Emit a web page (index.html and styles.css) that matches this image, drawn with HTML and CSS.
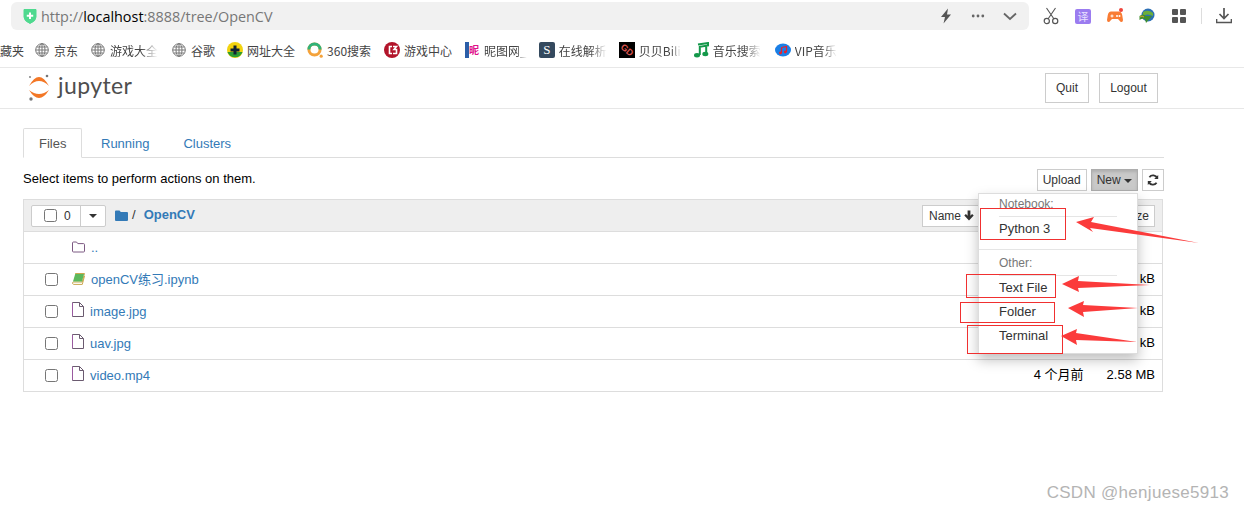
FILE: index.html
```html
<!DOCTYPE html>
<html lang="zh">
<head>
<meta charset="utf-8">
<title>OpenCV - Jupyter</title>
<link rel="stylesheet" href="styles.css">
</head>
<body>
<div class="browser-bar">
  <div class="address">
    <svg class="shield" viewBox="0 0 14 16"><path d="M1 1.5 L13 1.5 L13 9 Q13 13 7 15.5 Q1 13 1 9 Z" fill="#4fd98f" stroke="#4fd98f" stroke-linejoin="round"/><path d="M7 4.5v6.5M3.8 7.8h6.4" stroke="#fff" stroke-width="2"/></svg>
    <span class="url"><span class="dim">http://</span>localhost<span class="dim">:8888/tree/OpenCV</span></span>
    <span class="address-actions">
      <svg class="a-icon" viewBox="0 0 14 16"><path d="M9 0.5 L2 9 L6 9 L4.5 15.5 L12 6.5 L8 6.5 Z" fill="#555"/></svg>
      <svg class="a-icon" viewBox="0 0 14 16"><circle cx="2.2" cy="8" r="1.4" fill="#666"/><circle cx="7" cy="8" r="1.4" fill="#666"/><circle cx="11.8" cy="8" r="1.4" fill="#666"/></svg>
      <svg class="a-icon" viewBox="0 0 14 16"><path d="M1 5.5 L7 11 L13 5.5" fill="none" stroke="#666" stroke-width="1.8"/></svg>
    </span>
  </div>
  <div class="tools">
    <svg class="tool" viewBox="0 0 16 18"><path d="M3.5 1 L11 12M12.5 1 L5 12" stroke="#555" stroke-width="1.1" fill="none"/><circle cx="3.8" cy="14" r="2.6" fill="none" stroke="#555" stroke-width="1.2"/><circle cx="12.2" cy="14" r="2.6" fill="none" stroke="#555" stroke-width="1.2"/></svg>
    <span class="translate">译</span>
    <svg class="tool" viewBox="0 0 16 18"><path d="M4 4.5 H12 Q14.5 4.5 15.2 8 L16 13 Q16 15.5 13.8 15 L11 12 H5 L2.2 15 Q0 15.5 0 13 L0.8 8 Q1.5 4.5 4 4.5Z" fill="#f97c34"/><path d="M3.5 9h3M5 7.5v3" stroke="#fff"/><circle cx="10" cy="9" r="1" fill="#fff"/><circle cx="12.5" cy="9" r="1" fill="#fff"/><circle cx="14" cy="3" r="2" fill="#f0443c"/></svg>
    <svg class="tool" viewBox="0 0 16 18"><circle cx="9" cy="8" r="6.5" fill="#2c6fb5"/><path d="M4 5 Q9 2 14 6 L14 9 Q8 6 4 9Z" fill="#6cae3c"/><path d="M0.5 9 Q4 6 7 9 L13 9 L7 16 L6 12 Q3 11 0.5 13Z" fill="#3f8f2e"/><path d="M1 10 Q3 8 5 10" stroke="#e0a030" fill="none"/></svg>
    <svg class="tool" viewBox="0 0 16 18"><rect x="1" y="2" width="6" height="6" rx="1" fill="#555"/><rect x="9" y="2" width="6" height="6" rx="1" fill="#555"/><rect x="1" y="10" width="6" height="6" rx="1" fill="#555"/><rect x="9" y="10" width="6" height="6" rx="1" fill="#555"/></svg>
    <span class="tool-sep"></span>
    <svg class="tool" viewBox="0 0 16 18"><path d="M8 1v10M3.5 7 L8 11.5 L12.5 7" fill="none" stroke="#555" stroke-width="1.7"/><path d="M0.5 12v3.5h15V12" fill="none" stroke="#555" stroke-width="1.7"/></svg>
  </div>
</div>

<div class="bookmarks">
  <span class="bm bm-first"><span class="bm-text">收藏夹</span></span>
  <span class="bm bm-gap1"><svg class="globe" viewBox="0 0 14 14"><use href="#globe-art"/></svg><span class="bm-text">京东</span></span>
  <span class="bm bm-gap2"><svg class="globe" viewBox="0 0 14 14"><use href="#globe-art"/></svg><span class="bm-text fade">游戏大全</span></span>
  <span class="bm"><svg class="globe" viewBox="0 0 14 14"><use href="#globe-art"/></svg><span class="bm-text">谷歌</span></span>
  <span class="bm"><svg class="bm-icon" viewBox="0 0 16 16"><circle cx="8" cy="8" r="8" fill="#f2d30f"/><path d="M0.5 10 A8 8 0 0 0 15.5 10 Z" fill="#2d9d33"/><path d="M8 3.5v9M3.5 8h9" stroke="#123" stroke-width="3"/></svg><span class="bm-text">网址大全</span></span>
  <span class="bm bm-gap1"><svg class="bm-icon" viewBox="0 0 16 16"><circle cx="7.5" cy="7.5" r="5.6" fill="none" stroke="#f4a23a" stroke-width="3"/><path d="M1.9 7.5 A5.6 5.6 0 0 1 13.1 7.5" fill="none" stroke="#2fb37a" stroke-width="3"/><circle cx="14.2" cy="14.2" r="1.6" fill="#f4a23a"/></svg><span class="bm-text">360搜索</span></span>
  <span class="bm bm-gap1"><svg class="bm-icon" viewBox="0 0 16 16"><circle cx="8" cy="8" r="8" fill="#b2142a"/><path d="M8 4.5H5.5V11.5H8M9 4.5h3.5L10 7.5h2.5v4H9" fill="none" stroke="#fff" stroke-width="1.6"/></svg><span class="bm-text">游戏中心</span></span>
  <span class="bm"><span class="nitu"><span class="nitu-bar"></span><span class="nitu-glyph">昵</span></span><span class="bm-text fade-short">昵图网_</span></span>
  <span class="bm"><span class="s-icon">S</span><span class="bm-text fade">在线解析</span></span>
  <span class="bm"><span class="gd-icon"><span class="gd-text">GD</span></span><span class="bm-text fade-short">贝贝Bili</span></span>
  <span class="bm bm-gap2"><svg class="bm-icon" viewBox="0 0 16 16"><path d="M5 2.5 L15 1 V3.5 L6.8 4.8 V13 M13.2 3 V11.5" fill="none" stroke="#14984a" stroke-width="2"/><ellipse cx="4" cy="13.3" rx="3" ry="2.2" fill="#14984a"/><ellipse cx="12.3" cy="12" rx="3" ry="2.2" fill="#14984a"/></svg><span class="bm-text fade">音乐搜索</span></span>
  <span class="bm"><svg class="bm-icon" viewBox="0 0 16 16"><ellipse cx="8" cy="8" rx="8" ry="6.5" fill="#1a7fe6"/><path d="M6.5 5.5 L11.5 4.5 V10M6.5 5.5V11" fill="none" stroke="#e8202c" stroke-width="1.2"/><circle cx="5.5" cy="11" r="1.4" fill="#e8202c"/><circle cx="10.3" cy="10" r="1.4" fill="#e8202c"/></svg><span class="bm-text fade">VIP音乐</span></span>
</div>

<svg class="defs" aria-hidden="true"><defs><g id="globe-art" fill="none" stroke="#777" stroke-width="1"><circle cx="7" cy="7" r="6.3"/><ellipse cx="7" cy="7" rx="3" ry="6.3"/><path d="M0.7 7h12.6M1.6 4h10.8M1.6 10h10.8M7 .7v12.6"/></g></defs></svg>

<header class="jp-header">
  <svg class="jp-logo" viewBox="0 0 24 30">
    <path d="M1 12 Q11 -6 21 12 Q11 2 1 12Z" fill="#f37726"/>
    <path d="M1 16 Q11 32 21 16 Q11 24 1 16Z" fill="#f37726"/>
    <circle cx="19" cy="2" r="1.3" fill="#767677"/><circle cx="2" cy="3" r="0.9" fill="#767677"/><circle cx="3" cy="25" r="1.7" fill="#767677"/>
  </svg>
  <span class="jp-word">jupyter</span>
  <span class="jp-actions">
    <button class="btn btn-tall btn-quit">Quit</button>
    <button class="btn btn-tall btn-logout">Logout</button>
  </span>
</header>

<main class="container">
  <nav class="tabs">
    <a class="tab tab-active">Files</a>
    <a class="tab">Running</a>
    <a class="tab">Clusters</a>
  </nav>
  <div class="action-row">
    <span class="hint">Select items to perform actions on them.</span>
    <span class="action-buttons">
      <button class="btn">Upload</button>
      <span class="new-wrap">
        <button class="btn btn-on">New <i class="caret"></i></button>
        <div class="menu">
          <div class="menu-head">Notebook:</div>
          <div class="menu-rule"></div>
          <div class="menu-item">Python 3</div>
          <div class="menu-full-rule"></div>
          <div class="menu-head">Other:</div>
          <div class="menu-rule"></div>
          <div class="menu-item">Text File</div>
          <div class="menu-item">Folder</div>
          <div class="menu-item">Terminal</div>
        </div>
      </span>
      <button class="btn btn-icon"><svg class="refresh" viewBox="0 0 12 12"><path d="M10.2 4.2 A4.5 4.5 0 0 0 2.4 3.2 M1.8 7.8 A4.5 4.5 0 0 0 9.6 8.8" fill="none" stroke="#333" stroke-width="1.8"/><path d="M11.2 1 V5 H7.2Z M0.8 11 V7 H4.8Z" fill="#333"/></svg></button>
    </span>
  </div>

  <section class="list">
    <div class="list-head">
      <span class="select-group">
        <span class="select-left"><input type="checkbox" class="check"><span class="count">0</span></span>
        <span class="select-right"><i class="caret"></i></span>
      </span>
      <svg class="crumb-folder" viewBox="0 0 13 11"><path d="M0 1.5 Q0 .5 1 .5 H4.5 L5.8 2 H12 Q13 2 13 3 V10 Q13 11 12 11 H1 Q0 11 0 10Z" fill="#337ab7"/></svg>
      <span class="crumb-sep">/</span>
      <a class="crumb-link">OpenCV</a>
      <span class="sort-group">
        <button class="btn btn-sort">Name <svg class="arrow" viewBox="0 0 10 11"><path d="M5 10.5 L.3 5.6 L1.9 4 L3.6 5.8 V.5 H6.4 V5.8 L8.1 4 L9.7 5.6Z" fill="#333"/></svg></button>
        <button class="btn btn-size">Size</button>
      </span>
    </div>
    <div class="row">
      <span class="check-slot"></span>
      <svg class="f-icon" viewBox="0 0 13 12"><path d="M.5 2 Q.5 1 1.5 1 H4.5 L5.8 2.6 H11.5 Q12.5 2.6 12.5 3.6 V10 Q12.5 11 11.5 11 H1.5 Q.5 11 .5 10Z" fill="none" stroke="#7d5a83" stroke-width="1"/></svg>
      <a class="name name-parent">..</a>
    </div>
    <div class="row">
      <input type="checkbox" class="check">
      <svg class="f-icon" viewBox="0 0 13 12"><path d="M3.2 .5 H12.5 L10.2 9 H1.6 Q.5 9 .5 10 T1.6 11.4 H10.3 L12.5 3" fill="none" stroke="#caa64e" stroke-width="1"/><path d="M3.2 1 H12 L10 8.5 H1 Z" fill="#5cb85c"/></svg>
      <a class="name name-book">openCV练习.ipynb</a>
      <span class="size">kB</span>
    </div>
    <div class="row">
      <input type="checkbox" class="check">
      <svg class="f-icon f-file" viewBox="0 0 12 15"><use href="#file-art"/></svg>
      <a class="name">image.jpg</a>
      <span class="size">kB</span>
    </div>
    <div class="row">
      <input type="checkbox" class="check">
      <svg class="f-icon f-file" viewBox="0 0 12 15"><use href="#file-art"/></svg>
      <a class="name">uav.jpg</a>
      <span class="size">kB</span>
    </div>
    <div class="row">
      <input type="checkbox" class="check">
      <svg class="f-icon f-file" viewBox="0 0 12 15"><use href="#file-art"/></svg>
      <a class="name">video.mp4</a>
      <span class="modified">4 个月前</span>
      <span class="size size-last">2.58 MB</span>
    </div>
  </section>
</main>

<svg class="defs" aria-hidden="true"><defs><g id="file-art" fill="none" stroke-width="1"><path d="M.5 14.5 V.5 H7.5 L11.5 4.5 V14.5 Z" stroke="#6b5b70"/><path d="M.5 14V1" stroke="#9a5aa0"/><path d="M7.5 .5 V4.5 H11.5" stroke="#6b5b70"/></g></defs></svg>

<svg class="markup" viewBox="0 0 1244 512" aria-hidden="true">
  <g fill="none" stroke="#f03030" stroke-width="1">
    <rect x="980.5" y="208.5" width="85" height="31"/>
    <rect x="966.5" y="274.5" width="89" height="23"/>
    <rect x="960.5" y="302.5" width="94" height="20"/>
    <rect x="967.5" y="325.5" width="95" height="28"/>
  </g>
  <g fill="#fb3b3b">
    <polygon points="1076,222 1094,217 1091,222 1199,243 1090,228 1093,232"/>
    <polygon points="1062,284 1079,276 1078,281 1150,285 1078,288 1079,292"/>
    <polygon points="1068,308 1084,301 1083,305 1138,308 1083,312 1084,317"/>
    <polygon points="1061,336 1077,329 1076,333 1137,342 1076,340 1077,345"/>
  </g>
</svg>
<div class="watermark">CSDN @henjuese5913</div>
</body>
</html>
```

FILE: styles.css
```css
* { box-sizing: border-box; }
html, body { margin: 0; padding: 0; }
body {
  position: relative;
  width: 1244px;
  height: 512px;
  overflow: hidden;
  background: #fff;
  color: #000;
  font-family: "Liberation Sans", "Noto Sans CJK SC", sans-serif;
  font-size: 13px;
}
.defs { position: absolute; width: 0; height: 0; }

/* browser chrome */
.browser-bar { display: flex; align-items: center; height: 34px; padding: 2px 0 4px 11px; }
.address {
  display: flex; align-items: center;
  width: 1018px; height: 28px;
  padding: 0 12px 0 12px;
  background: #f1f1f1;
  border-radius: 6px;
}
.shield { width: 14px; height: 16px; margin-right: 4px; }
.url { font-size: 14.4px; color: #000; font-family: "Open Sans", "Liberation Sans", sans-serif; }
.dim { color: #777; }
.address-actions { display: flex; margin-left: auto; gap: 18px; }
.a-icon { width: 14px; height: 16px; }
.tools { display: flex; align-items: center; margin-left: 14px; gap: 16px; }
.tool { width: 16px; height: 18px; flex: none; }
.translate {
  width: 16px; height: 15px; border-radius: 2px;
  background: #9b7cf0; color: #e8e0ff;
  font: 11px/15px "Noto Sans CJK SC", sans-serif; text-align: center;
}
.tool-sep { width: 1px; height: 16px; background: #ddd; margin: 0 -2px 0 -2px; }
.bookmarks {
  display: flex; align-items: center; gap: 12px;
  height: 34px; padding-bottom: 1px;
  border-bottom: 1px solid #e8e8e8;
  overflow: hidden;
  font: 12px "Noto Sans CJK SC", sans-serif;
  color: #444;
  white-space: nowrap;
}
.bm { display: inline-flex; align-items: center; gap: 5px; flex: none; }
.bm-first { margin-left: -12px; gap: 0; margin-right: -1px; }
.bm-gap1 { margin-right: 1px; }
.bm-gap2 { margin-right: 2px; }
.bm-text { display: inline-block; }
.fade { -webkit-mask-image: linear-gradient(90deg, #000 65%, transparent); mask-image: linear-gradient(90deg, #000 65%, transparent); }
.fade-short { -webkit-mask-image: linear-gradient(90deg, #000 75%, transparent); mask-image: linear-gradient(90deg, #000 75%, transparent); }
.globe { width: 14px; height: 14px; flex: none; }
.bm-icon { width: 16px; height: 16px; flex: none; margin-right: -1px; }
.nitu { display: flex; width: 14px; height: 16px; flex: none; }
.nitu-bar { width: 4px; background: #2b5ea8; }
.nitu-glyph { width: 10px; font-size: 10px; line-height: 16px; color: #e0128a; font-weight: 700; }
.s-icon { width: 16px; height: 16px; flex: none; margin-right: -1px; border-radius: 2px; background: #34495e; color: #fff; font: 13px/16px "Liberation Serif", serif; text-align: center; }
.gd-icon { width: 16px; height: 16px; flex: none; margin-right: -1px; background: #000; text-align: center; }
.gd-text { display: block; color: #d9534f; font: 700 9px/16px "Liberation Sans", sans-serif; transform: rotate(40deg); }

/* jupyter header */
.jp-header {
  display: flex; align-items: center;
  height: 41px; padding-left: 28px; padding-right: 86px;
  border-bottom: 1px solid #e7e7e7;
}
.jp-logo { width: 24px; height: 30px; flex: none; margin-top: 1px; }
.jp-word { margin-left: 6px; font: 400 23px/1 "Lato", sans-serif; color: #4e4e4e; letter-spacing: .4px; margin-top: -6px; }
.jp-actions { display: flex; gap: 10px; margin-left: auto; }

/* buttons */
.btn {
  height: 22px; padding: 0 5px;
  background: #fff; border: 1px solid #ccc; border-radius: 0;
  color: #333;
  font: 12px "Liberation Sans", sans-serif;
  white-space: nowrap;
}
.btn-tall { height: 30px; padding: 0; }
.btn-quit { width: 44px; }
.btn-logout { width: 59px; }
.btn-on { background: #c9c9c9; border-color: #adadad; padding: 0 5px; box-shadow: inset 0 2px 3px rgba(0,0,0,.13); }
.btn-icon { width: 22px; padding: 0; display: flex; align-items: center; justify-content: center; }
.refresh { width: 12px; height: 12px; }
.caret {
  display: inline-block; width: 0; height: 0; vertical-align: middle;
  border-top: 4px solid #333; border-left: 4px solid transparent; border-right: 4px solid transparent;
}

/* main */
.container { width: 1141px; margin-left: 23px; padding-top: 19px; }
.tabs { display: flex; height: 30px; border-bottom: 1px solid #ddd; }
.tab { padding: 7px 15px 0; margin-right: 4px; height: 30px; color: #337ab7; font-size: 13px; line-height: 17px; }
.tab-active { width: 59px; padding-left: 15px; color: #555; background: #fff; border: 1px solid #ddd; border-bottom-color: #fff; border-radius: 2px 2px 0 0; padding-top: 6px; }
.action-row { display: flex; align-items: center; justify-content: space-between; height: 22px; margin-top: 11px; }
.hint { margin-top: -4px; }
.action-buttons { display: flex; gap: 4px; }
.new-wrap { position: relative; display: flex; }
.menu {
  position: absolute; z-index: 5; top: 24px; right: 0;
  width: 160px; height: 161px;
  padding-top: 1px;
  background: #fff;
  border: 1px solid #ddd;
  box-shadow: 0 6px 12px rgba(0,0,0,.25);
  color: #333;
}
.menu-head { padding-left: 20px; height: 18px; font-size: 12px; line-height: 18px; color: #777; }
.menu-rule { height: 1px; margin: 3px 20px 0; background: #e5e5e5; }
.menu-item { padding-left: 20px; height: 24px; font-size: 13px; line-height: 22px; }
.menu-rule + .menu-item { margin-top: 1px; }
.menu-full-rule { height: 1px; margin: 7px 0 4px; background: #e5e5e5; }

.list { margin-top: 8px; width: 1140px; border: 1px solid #ddd; border-bottom: 0; }
.list-head {
  display: flex; align-items: center;
  height: 32px; padding-left: 7px; padding-right: 7px;
  background: #eee; border-bottom: 1px solid #ddd;
}
.select-group { display: flex; height: 22px; background: #fff; border: 1px solid #ccc; border-radius: 2px; }
.select-left { display: flex; align-items: center; width: 49px; padding-left: 12px; border-right: 1px solid #ccc; }
.select-right { display: flex; align-items: center; justify-content: center; width: 24px; }
.check { width: 13px; height: 13px; margin: 0; flex: none; }
.count { margin-left: 7px; font-size: 12px; color: #333; }
.crumb-folder { width: 13px; height: 11px; margin: -1px 0 0 9px; flex: none; }
.crumb-sep { margin: -2px 0 0 4px; color: #333; font-size: 13px; }
.crumb-link { margin: -2px 0 0 8px; color: #337ab7; font-weight: 700; font-size: 13px; }
.sort-group { display: flex; gap: 0; margin-left: auto; }
.btn-sort { width: 63px; padding: 0 6px; text-align: left; }
.btn-size { width: 170px; text-align: right; }
.arrow { width: 10px; height: 11px; vertical-align: -1px; }
.row {
  display: flex; align-items: center;
  height: 32px; padding-left: 21px; padding-right: 7px;
  border-bottom: 1px solid #ddd;
}
.check-slot { width: 13px; flex: none; }
.f-icon { width: 13px; height: 12px; margin-left: 14px; margin-top: -2px; flex: none; }
.f-file { width: 12px; height: 15px; margin-top: -5px; }
.name { margin-left: 6px; color: #337ab7; font-size: 13px; }
.name-book { margin-top: -2px; }
.size { margin-left: auto; font-size: 13px; color: #000; margin-top: -2px; }
.modified { margin-left: auto; margin-right: -1px; font-size: 13px; margin-top: -4px; }
.size-last { margin-left: 24px; }

/* overlays */
.markup { position: absolute; z-index: 10; left: 0; top: 0; width: 1244px; height: 512px; pointer-events: none; }
.watermark { position: absolute; z-index: 11; right: 15px; bottom: 9px; font-size: 17px; color: #b4b4b4; letter-spacing: .3px; }
```
